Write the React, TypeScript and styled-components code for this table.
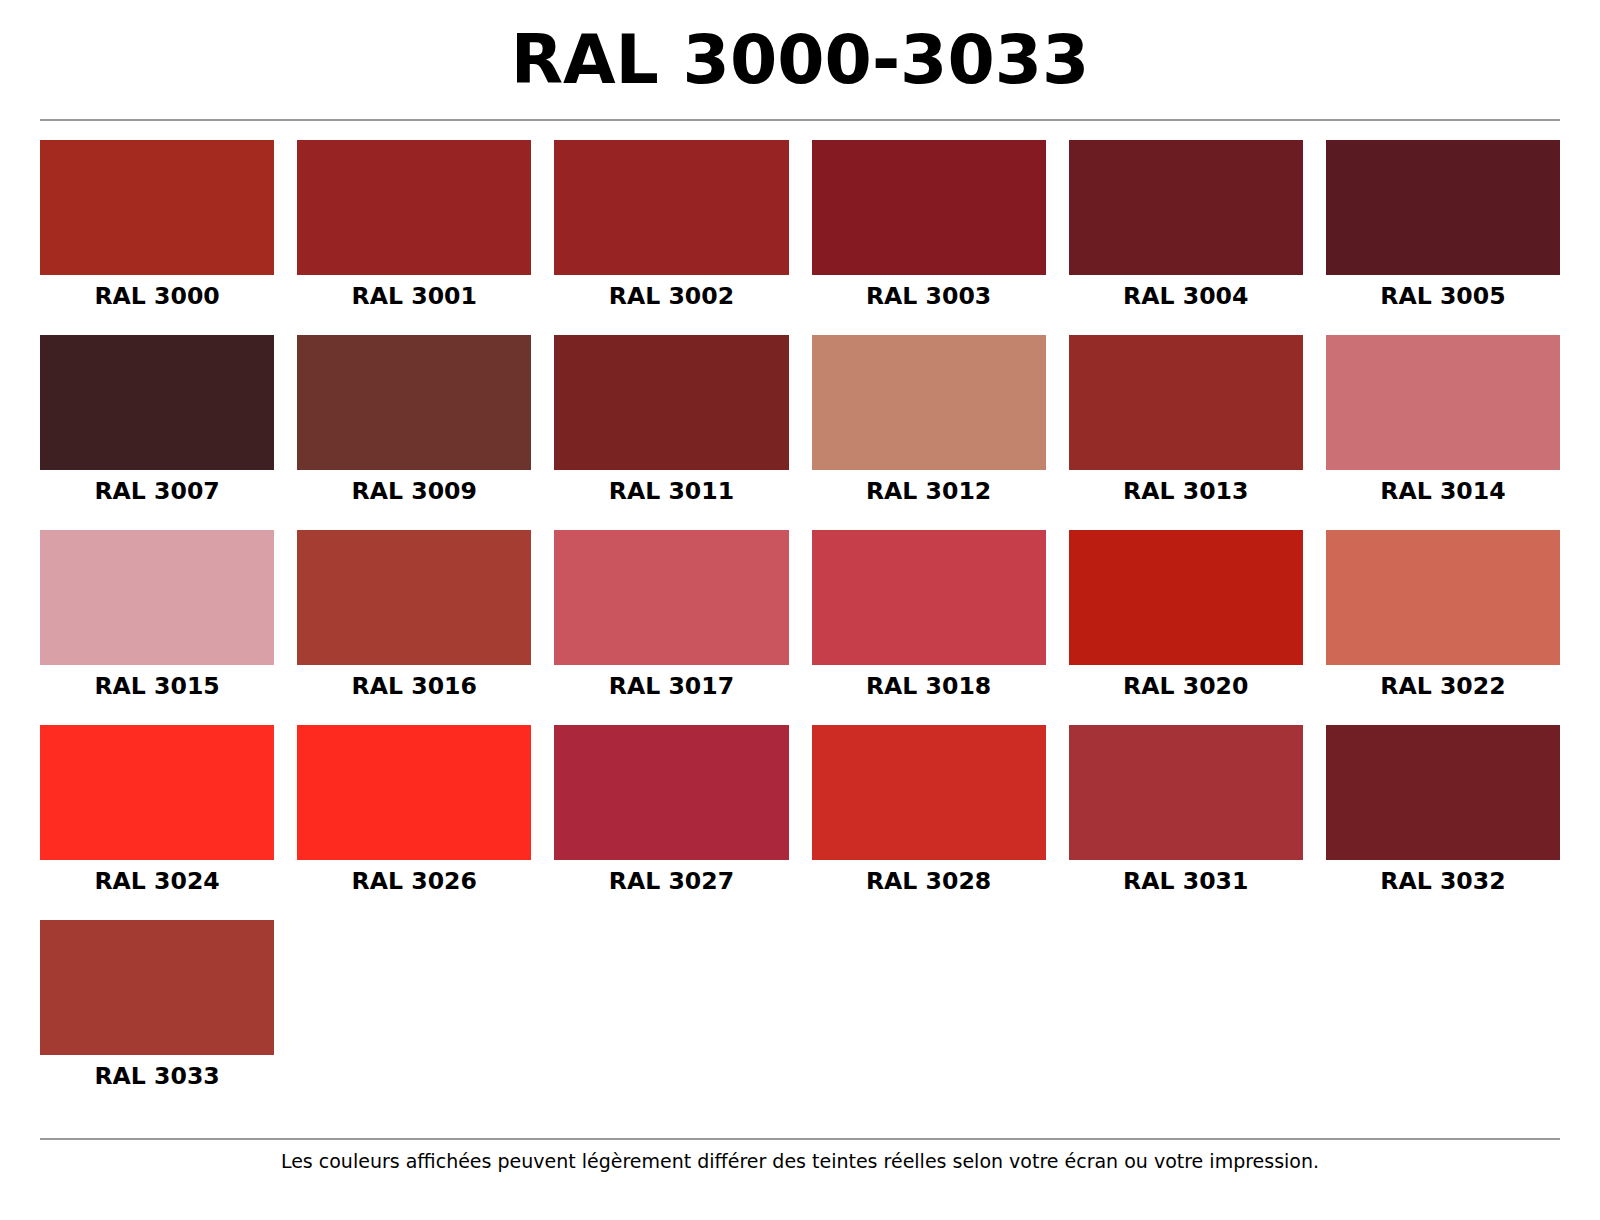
import styled, { createGlobalStyle } from "styled-components"

const GlobalStyle = createGlobalStyle`
  html, body {
    margin: 0;
    padding: 0;
    background: #ffffff;
  }

  body {
    font-family: "DejaVu Sans", "Liberation Sans", sans-serif;
    color: #000000;
  }
`

const Page = styled('div')`
  width: 1600px;
  box-sizing: border-box;
  padding: 26px 40px 0;
`

const Title = styled('h1')`
  margin: 0;
  font-size: 68px;
  line-height: 1;
  font-weight: 700;
  text-align: center;
`

const Rule = styled('hr')<{ $space: number }>`
  margin: ${p => p.$space}px 0 0;
  border: 0;
  height: 2px;
  background: #999999;
`

const Grid = styled('div')`
  display: grid;
  grid-template-columns: repeat(6, 1fr);
  column-gap: 23px;
  row-gap: 26px;
  margin-top: 19px;
`

const Card = styled('div')`
  display: flex;
  flex-direction: column;
  align-items: center;
`

const Swatch = styled('div')<{ $color: string }>`
  width: 100%;
  height: 135px;
  background: ${p => p.$color};
`

const Label = styled('div')`
  margin-top: 8px;
  font-size: 23.6px;
  line-height: 26px;
  font-weight: 700;
`

const Note = styled('p')`
  margin: 10px 0 0;
  font-size: 19px;
  line-height: 22px;
  text-align: center;
`

const colors: [string, string][] = [
  ['3000', '#a42a20'],
  ['3001', '#982323'],
  ['3002', '#982323'],
  ['3003', '#861a23'],
  ['3004', '#6b1c23'],
  ['3005', '#5a1a21'],
  ['3007', '#3e2022'],
  ['3009', '#6d342e'],
  ['3011', '#792323'],
  ['3012', '#c3846e'],
  ['3013', '#942b26'],
  ['3014', '#cb7175'],
  ['3015', '#d9a0a7'],
  ['3016', '#a53d32'],
  ['3017', '#cb555e'],
  ['3018', '#c73e4b'],
  ['3020', '#bb1e11'],
  ['3022', '#cf6955'],
  ['3024', '#ff2d21'],
  ['3026', '#ff2a1f'],
  ['3027', '#ab273c'],
  ['3028', '#cc2c24'],
  ['3031', '#a53237'],
  ['3032', '#721e25'],
  ['3033', '#a33b32'],
]

const App = (): JSX.Element => {

  return (
    <Page>
      <GlobalStyle />

      <Title>RAL 3000-3033</Title>

      <Rule $space={25} />

      <Grid>
        {colors.map(([code, hex]) => (
          <Card key={code}>
            <Swatch $color={hex} />
            <Label>RAL {code}</Label>
          </Card>
        ))}
      </Grid>

      <Rule $space={49} />

      <Note>Les couleurs affichées peuvent légèrement différer des teintes réelles selon votre écran ou votre impression.</Note>
    </Page>
  )
}

export default App
